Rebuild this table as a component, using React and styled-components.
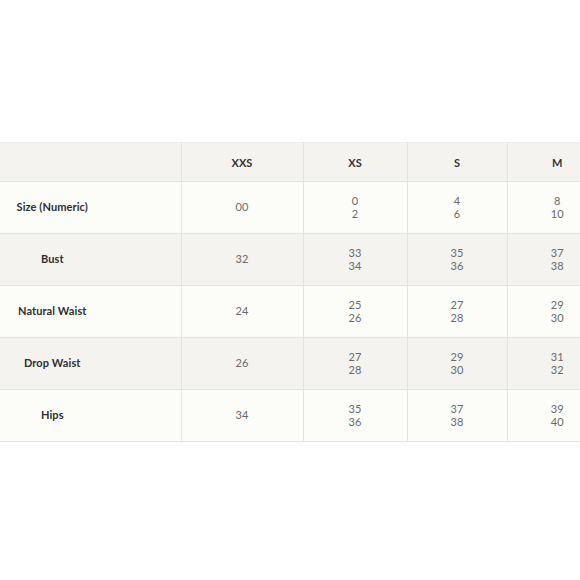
import React from "react";
import styled, { createGlobalStyle } from "styled-components";

const Global = createGlobalStyle`
  html, body { margin: 0; padding: 0; background: #ffffff; overflow: hidden; }
  body { width: 580px; height: 580px; font-family: Lato, "Open Sans", sans-serif; }
`;

const Page = styled.div`
  width: 580px;
  height: 580px;
  overflow: hidden;
  padding-top: 142px;
  box-sizing: border-box;
`;

const Table = styled.table`
  border-collapse: collapse;
  table-layout: fixed;
  width: 607px;
  border-top: 1px solid #ecebe7;
`;

const Col = styled.col`
  width: ${(p) => p.$w}px;
`;

const Row = styled.tr`
  background: ${(p) => (p.$shade ? "#f4f3f0" : "#fcfcf8")};
  height: ${(p) => (p.$head ? "39px" : "52px")};
  border-bottom: 1px solid #e4e3df;
`;

const HeadCell = styled.th`
  font-size: 11px;
  font-weight: 700;
  color: #333;
  text-align: center;
  vertical-align: middle;
  border-left: 1px solid #e4e3df;
  padding: 0;
  &:first-child { border-left: none; }
`;

const Label = styled.td`
  font-size: 11px;
  font-weight: 700;
  color: #2f2f2f;
  letter-spacing: 0.1px;
  text-align: center;
  padding: 0 76px 2px 0;
  vertical-align: middle;
  white-space: nowrap;
`;

const Value = styled.td`
  font-size: 11px;
  line-height: 13px;
  color: #6a6a6a;
  letter-spacing: 0.2px;
  text-align: center;
  vertical-align: middle;
  border-left: 1px solid #e4e3df;
  padding: 0 0 2px;
`;

const Line = styled.div``;

const widths = [181, 122, 104, 100, 100];
const sizes = ["XXS", "XS", "S", "M"];
const rows = [
  ["Size (Numeric)", ["00"], ["0", "2"], ["4", "6"], ["8", "10"]],
  ["Bust", ["32"], ["33", "34"], ["35", "36"], ["37", "38"]],
  ["Natural Waist", ["24"], ["25", "26"], ["27", "28"], ["29", "30"]],
  ["Drop Waist", ["26"], ["27", "28"], ["29", "30"], ["31", "32"]],
  ["Hips", ["34"], ["35", "36"], ["37", "38"], ["39", "40"]],
];

export default function App() {
  return (
    <Page>
      <Global />
      <Table>
        <colgroup>
          {widths.map((w, i) => (
            <Col key={i} $w={w} />
          ))}
        </colgroup>
        <thead>
          <Row $head $shade>
            <HeadCell />
            {sizes.map((s) => (
              <HeadCell key={s}>{s}</HeadCell>
            ))}
          </Row>
        </thead>
        <tbody>
          {rows.map(([label, ...vals], i) => (
            <Row key={label} $shade={i % 2 === 1}>
              <Label>{label}</Label>
              {vals.map((v, j) => (
                <Value key={j}>
                  {v.map((line, k) => (
                    <Line key={k}>{line}</Line>
                  ))}
                </Value>
              ))}
            </Row>
          ))}
        </tbody>
      </Table>
    </Page>
  );
}
